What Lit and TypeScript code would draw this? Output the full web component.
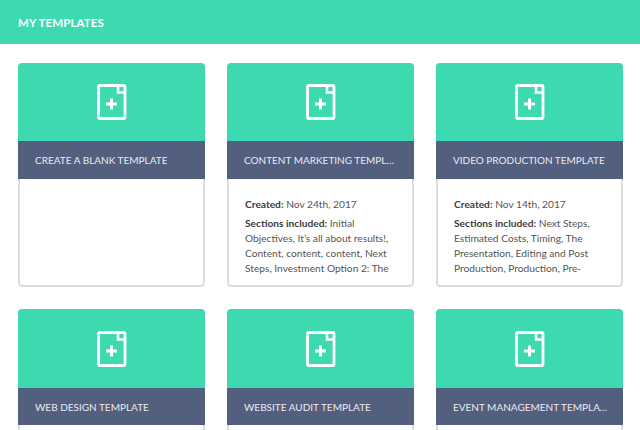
import { LitElement, html, css } from "lit";
import { customElement } from "lit/decorators.js";

const cards = [
  { title: "CREATE A BLANK TEMPLATE" },
  { title: "CONTENT MARKETING TEMPLATE", created: "Nov 24th, 2017", sections: "Initial Objectives, It\u2019s all about results!, Content, content, content, Next Steps, Investment Option 2: The Details, Timing" },
  { title: "VIDEO PRODUCTION TEMPLATE", created: "Nov 14th, 2017", sections: "Next Steps, Estimated Costs, Timing, The Presentation, Editing and Post Production, Production, Pre-Production, Overview" },
  { title: "WEB DESIGN TEMPLATE" },
  { title: "WEBSITE AUDIT TEMPLATE" },
  { title: "EVENT MANAGEMENT TEMPLATE" },
];

@customElement("app-root")
export class AppRoot extends LitElement {
  static styles = css`
    :host { display: block; width: 640px; height: 430px; overflow: hidden; background: #fff; font-family: "Lato", "Liberation Sans", sans-serif; color: #4a4a4a; }
    .header { height: 44.3px; background: #3dd9b0; color: #fff; display: flex; align-items: center; padding-left: 18px; font-size: 11.5px; font-weight: 700; letter-spacing: 0.1px; box-sizing: border-box; }
    .grid { display: grid; grid-template-columns: repeat(3, 187px); column-gap: 22px; row-gap: 22px; padding: 18.4px 18px 0; }
    .card { height: 224.6px; border-radius: 4px; display: flex; flex-direction: column; overflow: hidden; box-sizing: border-box; }
    .top { height: 78.6px; background: #3dd9b0; display: flex; align-items: center; justify-content: center; flex: none; }
    .top svg { display: block; margin-left: 1px; }
    .title { height: 37.4px; flex: none; background: #535f7f; color: #e9ebf0; font-size: 10px; display: flex; align-items: center; padding: 1px 15px 0 17px; box-sizing: border-box; }
    .title span { white-space: nowrap; overflow: hidden; text-overflow: ellipsis; }
    .body { flex: 1; min-height: 0; border: 2px solid #dcdcdc; border-top: none; border-radius: 0 0 4px 4px; padding: 18px 16px 0; font-size: 10.2px; line-height: 15px; color: #555; overflow: hidden; }
    .body b { color: #3c3c3c; font-weight: 700; }
    .created { margin-bottom: 4px; }
    .sections { height: 60px; overflow: hidden; }
  `;

  icon() {
    return html`<svg width="30" height="36" viewBox="0 0 30 36" fill="none">
      <rect x="1.500" y="1.500" width="26.500" height="33" rx="1.500" stroke="#fff" stroke-width="2.800"/>
      <path d="M21 1.500V8.500H28" stroke="#fff" stroke-width="2.600"/>
      <path d="M14.500 14.500V25.500M9 20H20" stroke="#fff" stroke-width="3"/>
    </svg>`;
  }

  render() {
    return html`
      <div class="header">MY TEMPLATES</div>
      <div class="grid">
        ${cards.map((c) => html`
          <div class="card">
            <div class="top">${this.icon()}</div>
            <div class="title"><span>${c.title}</span></div>
            <div class="body">
              ${c.created ? html`
                <div class="created"><b>Created:</b> ${c.created}</div>
                <div class="sections"><b>Sections included:</b> ${c.sections}</div>
              ` : ""}
            </div>
          </div>
        `)}
      </div>
    `;
  }
}
